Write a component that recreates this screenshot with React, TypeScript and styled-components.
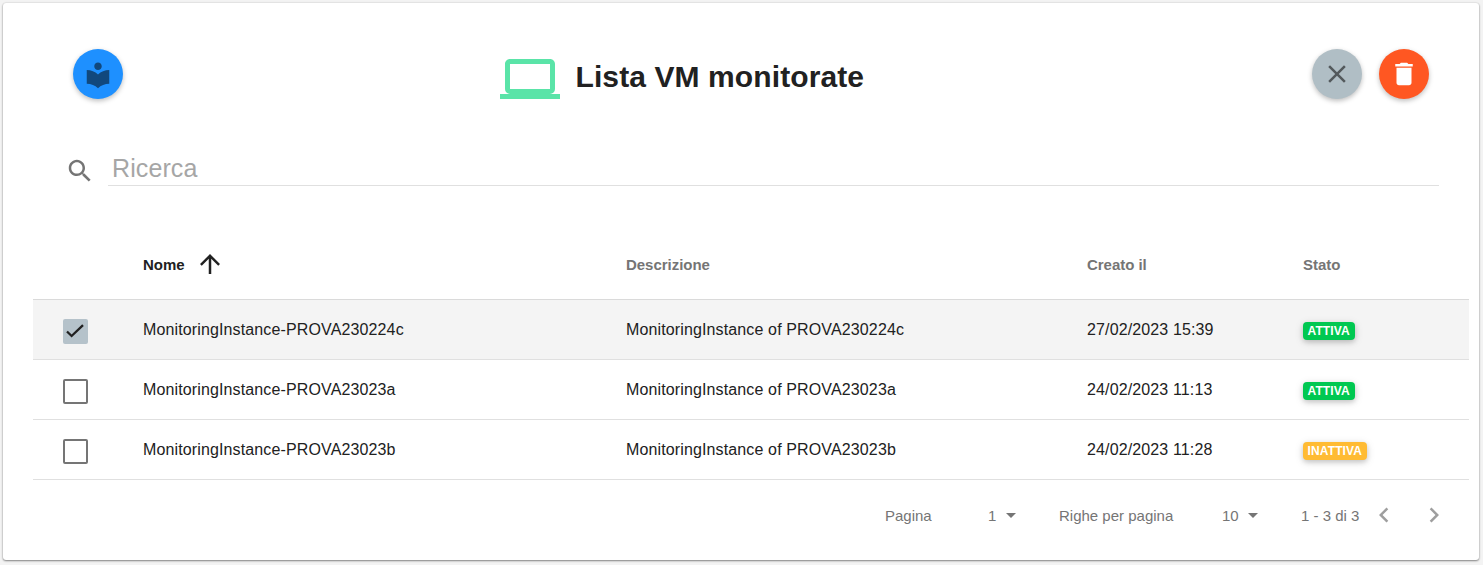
import React from 'react';
import styled, { createGlobalStyle } from 'styled-components';

const GlobalStyle = createGlobalStyle`
  * { box-sizing: border-box; }
  html { background: #f3f3f3; }
  body {
    margin: 0;
    font-family: "Liberation Sans", Arial, sans-serif;
    color: #212121;
  }
`;

const Page = styled.main`
  height: 565px;
  padding: 3px 4px 5px 3px;
  overflow: hidden;
`;

const Card = styled.section`
  height: 557px;
  border-radius: 3px;
  background: #fff;
  box-shadow: 0 1px 2px rgba(0, 0, 0, 0.44), 0 0 2px rgba(0, 0, 0, 0.16);
`;

const Toolbar = styled.header`
  display: grid;
  grid-template-columns: 427px auto 1fr;
  align-items: start;
  padding: 46px 50px 0 70px;
  height: 137px;
`;

const Title = styled.h1`
  display: flex;
  margin: 0;
  gap: 15.5px;
  font-size: 30px;
  font-weight: 700;
  line-height: 55px;
  letter-spacing: 0.1px;
  white-space: nowrap;
  color: #212121;
`;

const Actions = styled.div`
  display: flex;
  justify-content: flex-end;
  gap: 17px;
`;

const RoundButton = styled.button<{ $bg: string; $fg: string; $drop?: number }>`
  display: flex;
  align-items: center;
  justify-content: center;
  width: 50px;
  height: 50px;
  padding: ${({ $drop = 0 }) => $drop}px 0 0;
  border: 0;
  border-radius: 50%;
  background: ${({ $bg }) => $bg};
  color: ${({ $fg }) => $fg};
  box-shadow: 0 2px 5px rgba(0, 0, 0, 0.26);
`;

const Glyph = styled.svg`
  display: block;
  flex: none;
  fill: currentColor;
`;

const Search = styled.label`
  display: flex;
  align-items: flex-start;
  padding: 13px 40px 0 62px;
  height: 93px;
  color: #757575;
`;

const SearchIcon = styled.span`
  padding-top: 3px;
`;

const SearchInput = styled.input`
  flex: 1;
  height: 33px;
  margin-left: 13px;
  padding: 0 0 2px 4px;
  border: 0;
  border-bottom: 1px solid #e0e0e0;
  background: none;
  outline: 0;
  font: 25px "Liberation Sans", Arial, sans-serif;
  letter-spacing: 0.1px;
  &::placeholder { color: #a6a6a6; opacity: 1; }
`;

const Table = styled.div`
  margin: 0 10px 0 30px;
`;

const Row = styled.div<{ $selected?: boolean }>`
  display: grid;
  grid-template-columns: 110px 483px 461px 216px 1fr;
  align-items: center;
  height: 60px;
  border-bottom: 1px solid #e0e0e0;
  background: ${({ $selected }) => ($selected ? '#f4f4f4' : '#fff')};
  font-size: 16px;
  letter-spacing: 0.13px;
`;

const HeadRow = styled(Row)`
  height: 67px;
  padding-bottom: 3px;
  border-bottom-color: #dadada;
  font-size: 15px;
  font-weight: 700;
  letter-spacing: -0.03px;
  color: #757575;
`;

const SortHeading = styled.span`
  display: flex;
  align-items: center;
  gap: 10px;
  color: #212121;
`;

const SortArrow = styled.span`
  padding-bottom: 2px;
`;

const CheckBox = styled.span<{ $checked?: boolean }>`
  display: flex;
  align-items: center;
  justify-content: center;
  width: 25px;
  height: 25px;
  margin: 3px 0 0 30px;
  border: ${({ $checked }) => ($checked ? '0' : '2px solid #757575')};
  border-radius: 2px;
  background: ${({ $checked }) => ($checked ? '#b5c2ca' : 'transparent')};
`;

const Tick = styled.svg`
  display: block;
  fill: none;
  stroke: #212121;
  stroke-width: 2.3px;
`;

const Status = styled.span<{ $active: boolean }>`
  display: inline-block;
  height: 18px;
  margin-top: 3px;
  padding: 0 5px 0 4.5px;
  border-radius: 4px;
  justify-self: start;
  background: ${({ $active }) => ($active ? '#00c851' : '#ffbb33')};
  box-shadow: 0 2px 5px rgba(0, 0, 0, 0.16), 0 2px 10px rgba(0, 0, 0, 0.12);
  color: #fff;
  font-size: 12px;
  font-weight: 700;
  line-height: 18px;
  letter-spacing: 0.13px;
`;

const Pagination = styled.footer`
  display: flex;
  align-items: center;
  height: 71px;
  padding: 0 20px 0 882px;
  font-size: 15px;
  color: #757575;
  white-space: nowrap;
`;

const PageLabel = styled.span<{ $width: number }>`
  flex: none;
  width: ${({ $width }) => $width}px;
`;

const Select = styled.span<{ $width: number }>`
  display: flex;
  flex: none;
  align-items: center;
  width: ${({ $width }) => $width}px;
  gap: 9.5px;
`;

const Caret = styled.i`
  border: 5px solid transparent;
  border-top: 5px solid #757575;
  border-bottom: 0;
`;

const Pager = styled.button`
  flex: none;
  width: 50px;
  height: 50px;
  padding: 0 10px 1px;
  border: 0;
  background: none;
  color: #9e9e9e;
`;

type IconProps = { d: string; size?: number };
const Icon = ({ d, size = 30 }: IconProps) => (
  <Glyph width={size} height={size} viewBox="0 0 24 24" aria-hidden="true">
    <path d={d} />
  </Glyph>
);

const icons = {
  library:
    'M12 11.55C9.64 9.35 6.48 8 3 8v11c3.48 0 6.64 1.35 9 3.55 2.36-2.19 5.52-3.55 9-3.55V8c-3.48 0-6.64 1.35-9 3.55zM12 8c1.66 0 3-1.34 3-3s-1.34-3-3-3-3 1.34-3 3 1.34 3 3 3z',
  laptop: 'M4 6H20V16H4M20 18A2 2 0 0 0 22 16V6C22 4.89 21.1 4 20 4H4C2.89 4 2 4.89 2 6V16A2 2 0 0 0 4 18H0V20H24V18H20Z',
  close: 'M19 6.41L17.59 5 12 10.59 6.41 5 5 6.41 10.59 12 5 17.59 6.41 19 12 13.41 17.59 19 19 17.59 13.41 12z',
  trash: 'M6 19c0 1.1.9 2 2 2h8c1.1 0 2-.9 2-2V7H6v12zM19 4h-3.5l-1-1h-5l-1 1H5v2h14V4z',
  search:
    'M15.5 14h-.79l-.28-.27C15.41 12.59 16 11.11 16 9.5 16 5.91 13.09 3 9.5 3S3 5.91 3 9.5 5.91 16 9.5 16c1.61 0 3.09-.59 4.23-1.57l.27.28v.79l5 4.99L20.49 19l-4.99-5zm-6 0C7.01 14 5 11.99 5 9.5S7.01 5 9.5 5 14 7.01 14 9.5 11.99 14 9.5 14z',
  up: 'M4 12l1.41 1.41L11 7.83V20h2V7.83l5.58 5.59L20 12l-8-8-8 8z',
  left: 'M15.41 7.41L14 6l-6 6 6 6 1.41-1.41L10.83 12z',
  right: 'M10 6L8.59 7.41 13.17 12l-4.58 4.59L10 18l6-6z',
};

const machines = [
  { code: 'PROVA230224c', created: '27/02/2023 15:39', active: true, selected: true },
  { code: 'PROVA23023a', created: '24/02/2023 11:13', active: true, selected: false },
  { code: 'PROVA23023b', created: '24/02/2023 11:28', active: false, selected: false },
];

const LaptopSlot = styled.span`
  color: #5ae4a8;
`;

export default function App() {
  return (
    <Page>
      <GlobalStyle />
      <Card>
        <Toolbar>
          <RoundButton $bg="#1e90ff" $fg="#11487d" $drop={2}>
            <Icon d={icons.library} />
          </RoundButton>
          <Title>
            <LaptopSlot>
              <Icon d={icons.laptop} size={60} />
            </LaptopSlot>
            Lista VM monitorate
          </Title>
          <Actions>
            <RoundButton $bg="#b0bec5" $fg="#53595c">
              <Icon d={icons.close} />
            </RoundButton>
            <RoundButton $bg="#ff5722" $fg="#fff">
              <Icon d={icons.trash} />
            </RoundButton>
          </Actions>
        </Toolbar>
        <Search>
          <SearchIcon>
            <Icon d={icons.search} />
          </SearchIcon>
          <SearchInput placeholder="Ricerca" />
        </Search>
        <Table>
          <HeadRow>
            <span />
            <SortHeading>
              Nome
              <SortArrow>
                <Icon d={icons.up} />
              </SortArrow>
            </SortHeading>
            <span>Descrizione</span>
            <span>Creato il</span>
            <span>Stato</span>
          </HeadRow>
          {machines.map((m) => (
            <Row key={m.code} $selected={m.selected}>
              <CheckBox $checked={m.selected}>
                {m.selected && (
                  <Tick width="25" height="25" viewBox="0 0 25 25" aria-hidden="true">
                    <path d="M4 12.5L8.6 17L20 6.2" />
                  </Tick>
                )}
              </CheckBox>
              <span>MonitoringInstance-{m.code}</span>
              <span>MonitoringInstance of {m.code}</span>
              <span>{m.created}</span>
              <Status $active={m.active}>{m.active ? 'ATTIVA' : 'INATTIVA'}</Status>
            </Row>
          ))}
        </Table>
        <Pagination>
          <PageLabel $width={103}>Pagina</PageLabel>
          <Select $width={71}>
            1 <Caret />
          </Select>
          <PageLabel $width={163}>Righe per pagina</PageLabel>
          <Select $width={79}>
            10 <Caret />
          </Select>
          <PageLabel $width={58}>1 - 3 di 3</PageLabel>
          <Pager aria-label="Precedente">
            <Icon d={icons.left} />
          </Pager>
          <Pager aria-label="Successiva">
            <Icon d={icons.right} />
          </Pager>
        </Pagination>
      </Card>
    </Page>
  );
}
